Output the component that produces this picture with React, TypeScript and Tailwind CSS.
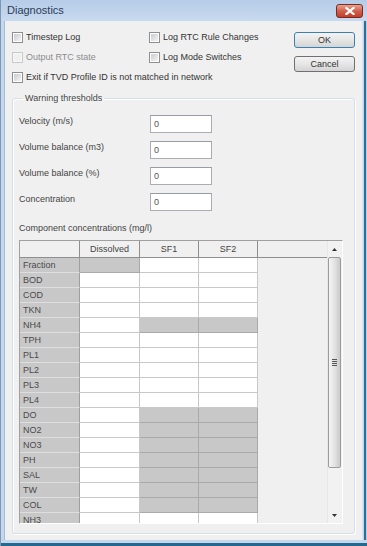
import React from "react";

// 1 = greyed-out (read only) cell
const rows: [string, number[]][] = [
  ["Fraction", [1, 0, 0]],
  ["BOD", [0, 0, 0]],
  ["COD", [0, 0, 0]],
  ["TKN", [0, 0, 0]],
  ["NH4", [0, 1, 1]],
  ["TPH", [0, 0, 0]],
  ["PL1", [0, 0, 0]],
  ["PL2", [0, 0, 0]],
  ["PL3", [0, 0, 0]],
  ["PL4", [0, 0, 0]],
  ["DO", [0, 1, 1]],
  ["NO2", [0, 1, 1]],
  ["NO3", [0, 1, 1]],
  ["PH", [0, 1, 1]],
  ["SAL", [0, 1, 1]],
  ["TW", [0, 1, 1]],
  ["COL", [0, 1, 1]],
  ["NH3", [0, 0, 0]],
];

const thresholds = [
  "Velocity (m/s)",
  "Volume balance (m3)",
  "Volume balance (%)",
  "Concentration",
];

function Check({ label, disabled }: { label: string; disabled?: boolean }) {
  return (
    <div className="flex items-center h-[20px]">
      <span
        className={`w-[11px] h-[11px] border flex items-center justify-center ${
          disabled ? "border-[#c9c9c9] bg-[#f7f7f7]" : "border-[#8f8f8f] bg-white"
        }`}
      >
        <span
          className={`w-[7px] h-[7px] ${
            disabled ? "bg-[#f0f0f0]" : "bg-gradient-to-br from-[#c9ccd1] to-[#f4f4f4]"
          }`}
        />
      </span>
      <span className={`ml-[3px] ${disabled ? "text-[#8d8d8d]" : "text-[#333]"}`}>{label}</span>
    </div>
  );
}

function Button({ label, active }: { label: string; active?: boolean }) {
  return (
    <div
      className={`w-[61px] h-[16px] rounded-[3px] border flex items-center justify-center bg-gradient-to-b from-[#f3f3f3] via-[#e6e6e6] to-[#d4d4d4] text-[#333] ${
        active ? "border-[#3c7fb1]" : "border-[#707070]"
      }`}
    >
      {label}
    </div>
  );
}

export default function App() {
  return (
    <div className="w-[367px] h-[546px] flex flex-col bg-[#c4d7ec] font-['Liberation_Sans',Arial,sans-serif] text-[9px] leading-none border-l border-[#7d97b6]">
      {/* title bar */}
      <div className="h-[22px] flex items-center justify-between pl-[6px] pr-[4px] bg-gradient-to-b from-[#b6cce8] to-[#c8daee]">
        <span className="text-[11px] text-[#2a3d57]">Diagnostics</span>
        <div className="w-[27px] h-[14px] rounded-[3px] border border-[#7a2b22] bg-gradient-to-b from-[#e6a392] via-[#d0604c] to-[#c33d28] flex items-center justify-center">
          <svg width="10" height="8" viewBox="0 0 10 8">
            <path d="M1.5 1 L8.5 7 M8.5 1 L1.5 7" stroke="#fff" strokeWidth="2.2" strokeLinecap="square" />
          </svg>
        </div>
      </div>

      <div className="flex flex-1">
        <div className="w-[3px]" />
        <div className="flex-1 flex flex-col bg-[#f0f0f0] border-l border-[#a5bcd6] border-r border-r-[#dbe5f0]">
          {/* options + buttons */}
          <div className="flex justify-between pl-[7px] pr-[7px] pt-[6px]">
            <div className="grid grid-cols-[137px_auto]">
              <Check label="Timestep Log" />
              <Check label="Log RTC Rule Changes" />
              <Check label="Output RTC state" disabled />
              <Check label="Log Mode Switches" />
              <div className="col-span-2">
                <Check label="Exit if TVD Profile ID is not matched in network" />
              </div>
            </div>
            <div className="flex flex-col gap-[8px] pt-[5px]">
              <Button label="OK" active />
              <Button label="Cancel" />
            </div>
          </div>

          {/* warning thresholds */}
          <fieldset className="mt-[7px] mx-[7px] mb-[6px] flex-1 border border-[#d5dfe5] rounded-[3px] px-[6px] pb-[9px] shadow-[inset_1px_1px_0_#fff,1px_1px_0_#fff]">
            <legend className="ml-[4px] px-[2px] text-[#444]">Warning thresholds</legend>
            <div className="flex flex-col gap-[8px] mt-[12px]">
              {thresholds.map((t) => (
                <div key={t} className="flex items-center">
                  <span className="w-[131px] text-[#444] -mt-[6px]">{t}</span>
                  <div className="w-[62px] h-[18px] bg-white border border-[#abadb3] border-t-[#979ca3] flex items-center pl-[3px] text-[#555]">
                    0
                  </div>
                </div>
              ))}
            </div>
            <div className="mt-[13px] mb-[7px] text-[#444]">Component concentrations (mg/l)</div>

            {/* grid */}
            <div className="w-[324px] h-[284px] flex border border-t-[#a0a0a0] border-l-[#a0a0a0] border-b-white border-r-white overflow-hidden">
              <div className="flex-1 flex flex-col">
                <div className="flex h-[17px] shrink-0 bg-[#f0f0f0] border-b border-[#8e8e8e]">
                  <div className="w-[60px] border-r border-[#8e8e8e]" />
                  <div className="w-[60px] border-r border-[#8e8e8e] flex items-center justify-center text-[#444]">Dissolved</div>
                  <div className="w-[59px] border-r border-[#8e8e8e] flex items-center justify-center text-[#444]">SF1</div>
                  <div className="w-[59px] border-r border-[#8e8e8e] flex items-center justify-center text-[#444]">SF2</div>
                </div>
                {rows.map(([name, cells]) => (
                  <div key={name} className="flex h-[15px] shrink-0">
                    <div className="w-[60px] bg-[#c8c8c8] border-r border-r-[#9e9e9e] border-b border-b-[#dedede] flex items-center pl-[3px] text-[#4a4a4a]">
                      {name}
                    </div>
                    {cells.map((g, i) => (
                      <div
                        key={i}
                        className={`${i === 0 ? "w-[60px]" : "w-[59px]"} border-r border-b ${
                          g ? "bg-[#c8c8c8] border-[#a9a9a9]" : "bg-white border-[#c8c8c8]"
                        }`}
                      />
                    ))}
                  </div>
                ))}
              </div>

              {/* scrollbar */}
              <div className="w-[14px] mr-[1px] flex flex-col bg-[#f2f2f2] border-l border-[#e6e6e6]">
                <div className="h-[16px] flex items-center justify-center">
                  <svg width="5" height="3" viewBox="0 0 5 3">
                    <path d="M2.5 0 L5 3 L0 3 Z" fill="#333" />
                  </svg>
                </div>
                <div className="h-[211px] rounded-[2px] border border-[#9b9b9b] bg-gradient-to-r from-[#f4f4f4] via-[#e3e3e3] to-[#cacaca] flex items-center justify-center">
                  <div className="flex flex-col gap-[1px]">
                    <div className="w-[5px] h-[1px] bg-[#555]" />
                    <div className="w-[5px] h-[1px] bg-[#555]" />
                    <div className="w-[5px] h-[1px] bg-[#555]" />
                    <div className="w-[5px] h-[1px] bg-[#555]" />
                  </div>
                </div>
                <div className="flex-1" />
                <div className="h-[15px] flex items-center justify-center">
                  <svg width="5" height="3" viewBox="0 0 5 3">
                    <path d="M0 0 L5 0 L2.5 3 Z" fill="#333" />
                  </svg>
                </div>
              </div>
            </div>
          </fieldset>
        </div>
        <div className="w-[4px] flex">
          <div className="w-[1px] bg-[#c4d7ec]" />
          <div className="w-[2px] bg-[#2c6f98]" />
          <div className="w-[1px] bg-[#b5cce3]" />
        </div>
      </div>
      <div className="h-[3px] bg-[#c4d7ec]" />
      <div className="h-[3px] bg-[#22698f]" />
    </div>
  );
}
